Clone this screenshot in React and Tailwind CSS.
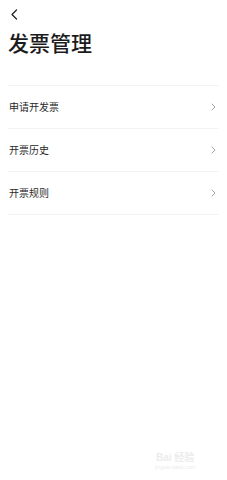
import React from "react";

const rows = ["申请开发票", "开票历史", "开票规则"];

function Chevron() {
  return (
    <svg width="5" height="8" viewBox="0 0 5 8" fill="none" className="shrink-0">
      <path d="M1 1l3 3-3 3" stroke="#9a9a9a" strokeWidth="0.9" strokeLinecap="round" strokeLinejoin="round" />
    </svg>
  );
}

export default function App() {
  return (
    <div
      className="relative w-[227px] h-[480px] bg-white overflow-hidden"
      style={{ fontFamily: '"Noto Sans CJK SC", "Noto Sans", sans-serif' }}
    >
      <div className="pl-[10px] pt-[9px] h-[20px]">
        <svg width="8" height="11" viewBox="0 0 8 11" fill="none">
          <path d="M6.5 1L2 5.5 6.5 10" stroke="#222" strokeWidth="1.3" strokeLinecap="round" strokeLinejoin="round" />
        </svg>
      </div>
      <h1 className="pl-[8px] mt-[9px] text-[21px] leading-[26px] font-medium text-[#1c1c1c]">发票管理</h1>
      <div className="mx-[8px] mt-[30px] border-t border-[#f3f3f3]">
        {rows.map((r) => (
          <div
            key={r}
            className="flex items-center justify-between h-[43px] border-b border-[#f3f3f3] pr-[3px]"
          >
            <span className="text-[10px] leading-none text-[#2a2a2a] pl-[1px]">{r}</span>
            <Chevron />
          </div>
        ))}
      </div>
      <div className="absolute left-[155px] top-[452px] flex flex-col items-center text-[#ececec]">
        <span className="text-[10px] leading-[12px] font-bold" style={{ fontFamily: '"Liberation Sans", "Noto Sans CJK SC", sans-serif' }}>Bai 经验</span>
        <span className="text-[5px] leading-[7px]" style={{ fontFamily: '"Liberation Sans", sans-serif' }}>jingyan.baidu.com</span>
      </div>
    </div>
  );
}
